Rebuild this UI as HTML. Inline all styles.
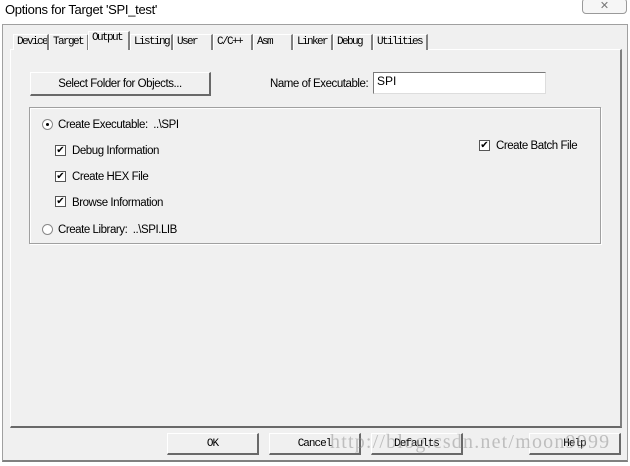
<!DOCTYPE html>
<html><head><style>
*{margin:0;padding:0;box-sizing:border-box}
body{width:630px;height:466px;background:#fff;position:relative;overflow:hidden;font-family:"Liberation Sans",Arial,sans-serif;font-size:12px;color:#000}
.a{position:absolute}
.title{left:5px;top:2px;font-size:13px;letter-spacing:-0.3px}
.close{left:582px;top:-2px;width:45px;height:16px;border:1px solid #9a9a9a;border-radius:4px;background:#f6f6f6;text-align:center;font-size:11px;color:#777;line-height:14px}
.dlg{left:2px;top:24px;width:626px;height:438px;background:#f0f0f0;border:1px solid #a0a0a0;border-bottom:2px solid #808080}
.panel{left:10px;top:49px;width:612px;height:379px;border-left:1px solid #fff;border-top:1px solid #fff;border-right:2px solid #808080;border-bottom:2px solid #696969}
.tab{top:34px;height:16px;border-left:1px solid #fff;border-top:1px solid #fff;border-right:2px solid #808080;font-family:"Liberation Mono",monospace;font-size:11px;letter-spacing:-1.6px;padding-left:3px;line-height:15px;background:#f0f0f0;white-space:nowrap;overflow:hidden}
.tab.sel{top:31px;height:19px;z-index:2;line-height:13px}
.btn{background:#f0f0f0;border-left:1px solid #fff;border-top:1px solid #fff;border-right:2px solid #696969;border-bottom:2px solid #696969;text-align:center}
.mono{font-family:"Liberation Mono",monospace;font-size:11px;letter-spacing:-1px}
.cb{width:11px;height:11px;border:1px solid #555;background:#fff;font-size:10px;line-height:9px;text-align:center}
.rb{width:11px;height:11px;border:1px solid #888;border-radius:50%;background:#fff}
.lbl{font-size:11.5px;letter-spacing:-0.45px;white-space:nowrap}
</style></head><body>
<div class="a title">Options for Target 'SPI_test'</div>
<div class="a close">✕</div>
<div class="a dlg"></div>
<div class="a panel"></div>
<div class="a tab" style="left:13px;width:36px">Device</div>
<div class="a tab" style="left:49px;width:40px">Target</div>
<div class="a tab sel" style="left:88px;width:42px">Output</div>
<div class="a tab" style="left:130px;width:43px">Listing</div>
<div class="a tab" style="left:173px;width:40px">User</div>
<div class="a tab" style="left:213px;width:40px">C/C++</div>
<div class="a tab" style="left:253px;width:40px">Asm</div>
<div class="a tab" style="left:293px;width:40px">Linker</div>
<div class="a tab" style="left:333px;width:40px">Debug</div>
<div class="a tab" style="left:373px;width:55px">Utilities</div>

<div class="a btn lbl" style="left:30px;top:72px;width:181px;height:24px;line-height:22px">Select Folder for Objects...</div>
<div class="a lbl" style="left:270px;top:78px">Name of Executable:</div>
<div class="a" style="left:373px;top:72px;width:173px;height:22px;background:#fff;border:1px solid #7a7a7a;border-right-color:#ddd;border-bottom-color:#ddd;padding:1px 3px;font-size:12px">SPI</div>

<div class="a" style="left:29px;top:107px;width:572px;height:137px;border:1px solid #a0a0a0;box-shadow:inset 1px 1px 0 #fff,1px 1px 0 #fff"></div>
<div class="a rb" style="left:42px;top:119px"><div class="a" style="left:3px;top:3px;width:3px;height:3px;background:#000;border-radius:50%"></div></div>
<div class="a lbl" style="left:58px;top:119px">Create Executable:&nbsp; ..\SPI</div>
<div class="a cb" style="left:55px;top:145px">✔</div><div class="a lbl" style="left:72px;top:145px">Debug Information</div>
<div class="a cb" style="left:55px;top:171px">✔</div><div class="a lbl" style="left:72px;top:171px">Create HEX File</div>
<div class="a cb" style="left:55px;top:196px">✔</div><div class="a lbl" style="left:72px;top:197px">Browse Information</div>
<div class="a cb" style="left:479px;top:140px">✔</div><div class="a lbl" style="left:496px;top:140px">Create Batch File</div>
<div class="a rb" style="left:42px;top:224px"></div>
<div class="a lbl" style="left:58px;top:224px">Create Library:&nbsp; ..\SPI.LIB</div>

<div class="a btn mono" style="left:167px;top:433px;width:92px;height:22px;line-height:20px">OK</div>
<div class="a btn mono" style="left:269px;top:433px;width:92px;height:22px;line-height:20px">Cancel</div>
<div class="a btn mono" style="left:371px;top:433px;width:92px;height:22px;line-height:20px">Defaults</div>
<div class="a btn mono" style="left:529px;top:433px;width:92px;height:22px;line-height:20px">Help</div>
<div class="a" style="left:330px;top:431px;font-family:'Liberation Serif',serif;font-size:20px;color:rgba(150,150,150,0.55);letter-spacing:1.2px;white-space:nowrap">http://blog.csdn.net/moon9999</div>
</body></html>
